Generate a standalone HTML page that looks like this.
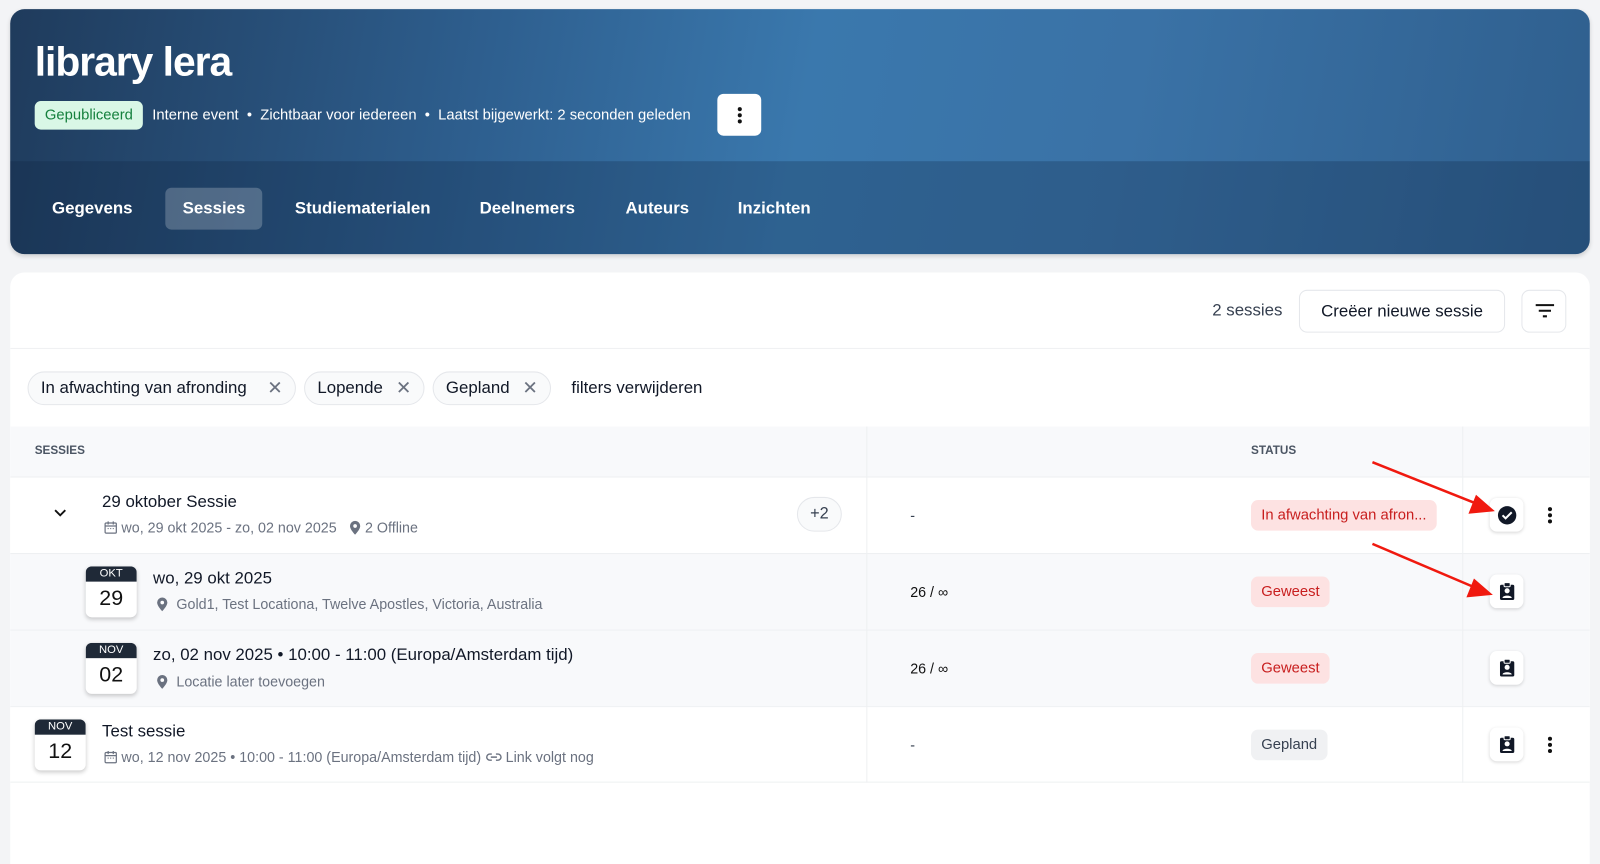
<!DOCTYPE html>
<html><head><meta charset="utf-8"><style>
*{box-sizing:border-box;margin:0;padding:0}
html,body{width:1600px;height:864px;overflow:hidden}
body{background:#f3f4f6;font-family:"Liberation Sans",sans-serif;position:relative;color:#111827}
#w{position:absolute;left:0;top:0;width:1568px;height:847px;transform:scale(1.0204);transform-origin:0 0}
.hdr{position:absolute;left:10px;top:9px;width:1548px;height:240px;border-radius:14px;overflow:hidden;background:linear-gradient(100deg,#1f3b5c 0%,#2e5f8f 30%,#3a78ad 50%,#3a72a6 70%,#2f5f8e 100%);box-shadow:0 2px 4px rgba(0,0,0,.15)}
.tabs{position:absolute;left:0;top:149px;width:100%;height:91px;background:rgba(10,30,60,.25)}
.h1{position:absolute;left:24px;top:30px;font-size:40px;font-weight:bold;color:#fff;letter-spacing:-1px}
.meta{position:absolute;left:24px;top:89px;height:30px;display:flex;align-items:center;color:#fff;font-size:14.5px}
.pub{background:#d9f7e6;color:#15803d;border-radius:6px;padding:6px 10px;margin-right:9px}
.dots{position:absolute;left:693px;top:83px;width:43px;height:41px;background:#fff;border-radius:6px}
.tab{position:absolute;top:175px;height:41px;line-height:41px;color:#fff;font-size:16.5px;font-weight:bold;padding:0 17px}
.card{position:absolute;left:10px;top:267px;width:1548px;height:620px;background:#fff;border-radius:14px;overflow:hidden}
.abs{position:absolute}
.btn{position:absolute;background:#fff;border:1px solid #e5e7eb;border-radius:8px}
.chip{position:absolute;top:97px;height:33px;border:1px solid #e5e7eb;background:#f9fafb;border-radius:17px;font-size:16.5px;line-height:31px;padding-left:12px}
.chip span{position:absolute;right:12px;top:0;color:#6b7280;font-size:18px}
.row{position:absolute;left:0;width:1548px;height:75px;border-top:1px solid #eef0f2}
.t{position:absolute;font-size:16.5px;color:#111827}
.s{position:absolute;font-size:14px;color:#6b7280;display:flex;align-items:center;gap:4px;white-space:nowrap}
.cal{position:absolute;width:50px;height:50px;border-radius:6px;background:#fff;box-shadow:0 2px 4px rgba(0,0,0,.2);overflow:hidden;text-align:center}
.cal b{display:block;height:15px;background:#1f2937;color:#fff;font-size:11px;font-weight:normal;line-height:15px}
.cal i{display:block;font-style:normal;font-size:21px;line-height:33px;color:#111}
.badge{position:absolute;height:30px;line-height:30px;padding:0 10px;border-radius:7px;font-size:14.5px}
.red{background:#fde2e2;color:#c81e1e}
.ib{position:absolute;left:1450px;width:33px;height:33px;background:#fff;border-radius:7px;box-shadow:0 1px 3px rgba(0,0,0,.15);display:flex;align-items:center;justify-content:center}
.vd{position:absolute;left:1507px;width:4px;height:16px}
.vd::before{content:"";position:absolute;left:0;top:0;width:4px;height:4px;border-radius:2px;background:#111;box-shadow:0 6px 0 #111,0 12px 0 #111}
</style></head><body>
<svg width="0" height="0" style="position:absolute"><defs>
<g id="badge"><rect x="2" y="3" width="14" height="15" rx="1.5" fill="#111827"/><rect x="6" y="1" width="6" height="4" rx="1" fill="#111827" stroke="#fff" stroke-width="1"/><circle cx="9" cy="9" r="2.5" fill="#fff"/><path d="M4.5 16c0-3 9-3 9 0z" fill="#fff"/></g>
<g id="pin"><path d="M6 0.5a5 5 0 0 0-5 5c0 3.5 5 8.5 5 8.5s5-5 5-8.5a5 5 0 0 0-5-5z" fill="#6b7280"/><circle cx="6" cy="5.5" r="1.8" fill="#fff"/></g>
<g id="calic"><rect x="1" y="2.5" width="11" height="10" rx="1" fill="none" stroke="#6b7280" stroke-width="1.2"/><path d="M1 5.5h11M4 1v3M9 1v3" stroke="#6b7280" stroke-width="1.2"/><path d="M3.5 8h1M6 8h1M8.5 8h1" stroke="#6b7280" stroke-width="1.2"/></g>
<g id="link"><path d="M6 4H4a3 3 0 0 0 0 6h2M10 4h2a3 3 0 0 1 0 6h-2M5 7h6" stroke="#6b7280" stroke-width="1.4" fill="none"/></g>
</defs></svg>
<div id="w">
<div class="hdr">
<div class="tabs"></div>
<div class="h1">library lera</div>
<div class="meta"><span class="pub">Gepubliceerd</span>Interne event&nbsp;&nbsp;•&nbsp;&nbsp;Zichtbaar voor iedereen&nbsp;&nbsp;•&nbsp;&nbsp;Laatst bijgewerkt: 2 seconden geleden</div>
<div class="dots"><div class="vd" style="left:20px;top:13px"></div></div>
<div class="tab" style="left:24px">Gegevens</div>
<div class="tab" style="left:152px;background:rgba(255,255,255,.22);border-radius:6px">Sessies</div>
<div class="tab" style="left:262px">Studiematerialen</div>
<div class="tab" style="left:443px">Deelnemers</div>
<div class="tab" style="left:586px">Auteurs</div>
<div class="tab" style="left:696px">Inzichten</div>
</div>
<div class="card">
<div class="abs" style="left:1178px;top:28px;font-size:16.5px;color:#374151">2 sessies</div>
<div class="btn" style="left:1263px;top:17px;width:202px;height:42px;font-size:16.5px;line-height:40px;text-align:center">Creëer nieuwe sessie</div>
<div class="btn" style="left:1481px;top:17px;width:44px;height:42px"><svg width="44" height="40" viewBox="0 0 44 40"><path d="M13 14h18M16 19.5h12M20 25h4" stroke="#111" stroke-width="2"/></svg></div>
<div class="abs" style="left:0;top:74px;width:1548px;height:1px;background:#f0f1f3"></div>
<div class="chip" style="left:17px;width:263px">In afwachting van afronding<span>✕</span></div>
<div class="chip" style="left:288px;width:118px">Lopende<span>✕</span></div>
<div class="chip" style="left:414px;width:116px">Gepland<span>✕</span></div>
<div class="abs" style="left:550px;top:104px;font-size:16.5px">filters verwijderen</div>
<div class="abs" style="left:0;top:151px;width:1548px;height:50px;background:#f8f9fb"></div>
<div class="abs" style="left:24px;top:169px;font-size:11.5px;font-weight:bold;color:#4b5563">SESSIES</div>
<div class="abs" style="left:1216px;top:169px;font-size:11.5px;font-weight:bold;color:#4b5563">STATUS</div>

<div class="row" style="top:200px;background:#fff"></div>
<div class="row" style="top:275px;background:#f8f9fb"></div>
<div class="row" style="top:350px;background:#f8f9fb"></div>
<div class="row" style="top:425px;background:#fff;border-bottom:1px solid #eef0f2"></div>
<div class="abs" style="left:839px;top:151px;width:1px;height:349px;background:#eef0f2"></div>
<div class="abs" style="left:1423px;top:151px;width:1px;height:349px;background:#eef0f2"></div>

<svg class="abs" style="left:42px;top:231px" width="14" height="10"><path d="M2 2l5 5 5-5" stroke="#111" stroke-width="1.8" fill="none"/></svg>
<div class="t" style="left:90px;top:216px">29 oktober Sessie</div>
<div class="s" style="left:92px;top:242px"><svg width="13" height="14"><use href="#calic"/></svg>wo, 29 okt 2025 - zo, 02 nov 2025 &nbsp;<svg width="12" height="15"><use href="#pin"/></svg>2 Offline</div>
<div class="abs" style="left:771px;top:220px;width:44px;height:34px;border-radius:17px;border:1px solid #e5e7eb;background:#f9fafb;text-align:center;line-height:32px;font-size:16px;color:#374151">+2</div>
<div class="s" style="left:882px;top:230px;color:#374151">-</div>
<div class="badge red" style="left:1216px;top:223px">In afwachting van afron...</div>

<div class="cal" style="left:74px;top:288px"><b>OKT</b><i>29</i></div>
<div class="t" style="left:140px;top:291px">wo, 29 okt 2025</div>
<div class="s" style="left:143px;top:317px"><svg width="12" height="15"><use href="#pin"/></svg>&nbsp;Gold1, Test Locationa, Twelve Apostles, Victoria, Australia</div>
<div class="s" style="left:882px;top:305px;color:#111">26 / ∞</div>
<div class="badge red" style="left:1216px;top:298px">Geweest</div>

<div class="cal" style="left:74px;top:363px"><b>NOV</b><i>02</i></div>
<div class="t" style="left:140px;top:366px">zo, 02 nov 2025 • 10:00 - 11:00 (Europa/Amsterdam tijd)</div>
<div class="s" style="left:143px;top:393px"><svg width="12" height="15"><use href="#pin"/></svg>&nbsp;Locatie later toevoegen</div>
<div class="s" style="left:882px;top:380px;color:#111">26 / ∞</div>
<div class="badge red" style="left:1216px;top:373px">Geweest</div>

<div class="cal" style="left:24px;top:438px"><b>NOV</b><i>12</i></div>
<div class="t" style="left:90px;top:441px">Test sessie</div>
<div class="s" style="left:92px;top:467px"><svg width="13" height="14"><use href="#calic"/></svg>wo, 12 nov 2025 • 10:00 - 11:00 (Europa/Amsterdam tijd) <svg width="16" height="14"><use href="#link"/></svg>Link volgt nog</div>
<div class="s" style="left:882px;top:455px;color:#374151">-</div>
<div class="badge" style="left:1216px;top:448px;background:#f0f1f3;color:#374151">Gepland</div>

<div class="ib" style="top:221px"><svg width="20" height="20"><circle cx="10" cy="10" r="9" fill="#111827"/><path d="M5.5 10l3 3 6-6" stroke="#fff" stroke-width="2" fill="none"/></svg></div>
<div class="vd" style="top:230px"></div>
<div class="ib" style="top:296px"><svg width="18" height="19"><use href="#badge"/></svg></div>
<div class="ib" style="top:371px"><svg width="18" height="19"><use href="#badge"/></svg></div>
<div class="ib" style="top:446px"><svg width="18" height="19"><use href="#badge"/></svg></div>
<div class="vd" style="top:455px"></div>
</div>
<svg class="abs" style="left:0;top:0" width="1568" height="864"><g stroke="#f0190f" stroke-width="2.5" fill="#f0190f"><line x1="1345" y1="453" x2="1448" y2="494"/><polygon points="1462,500 1441,502 1447,487"/><line x1="1345" y1="533" x2="1446" y2="576"/><polygon points="1460,582 1439,584 1445,569"/></g></svg>
</div>
</body></html>
